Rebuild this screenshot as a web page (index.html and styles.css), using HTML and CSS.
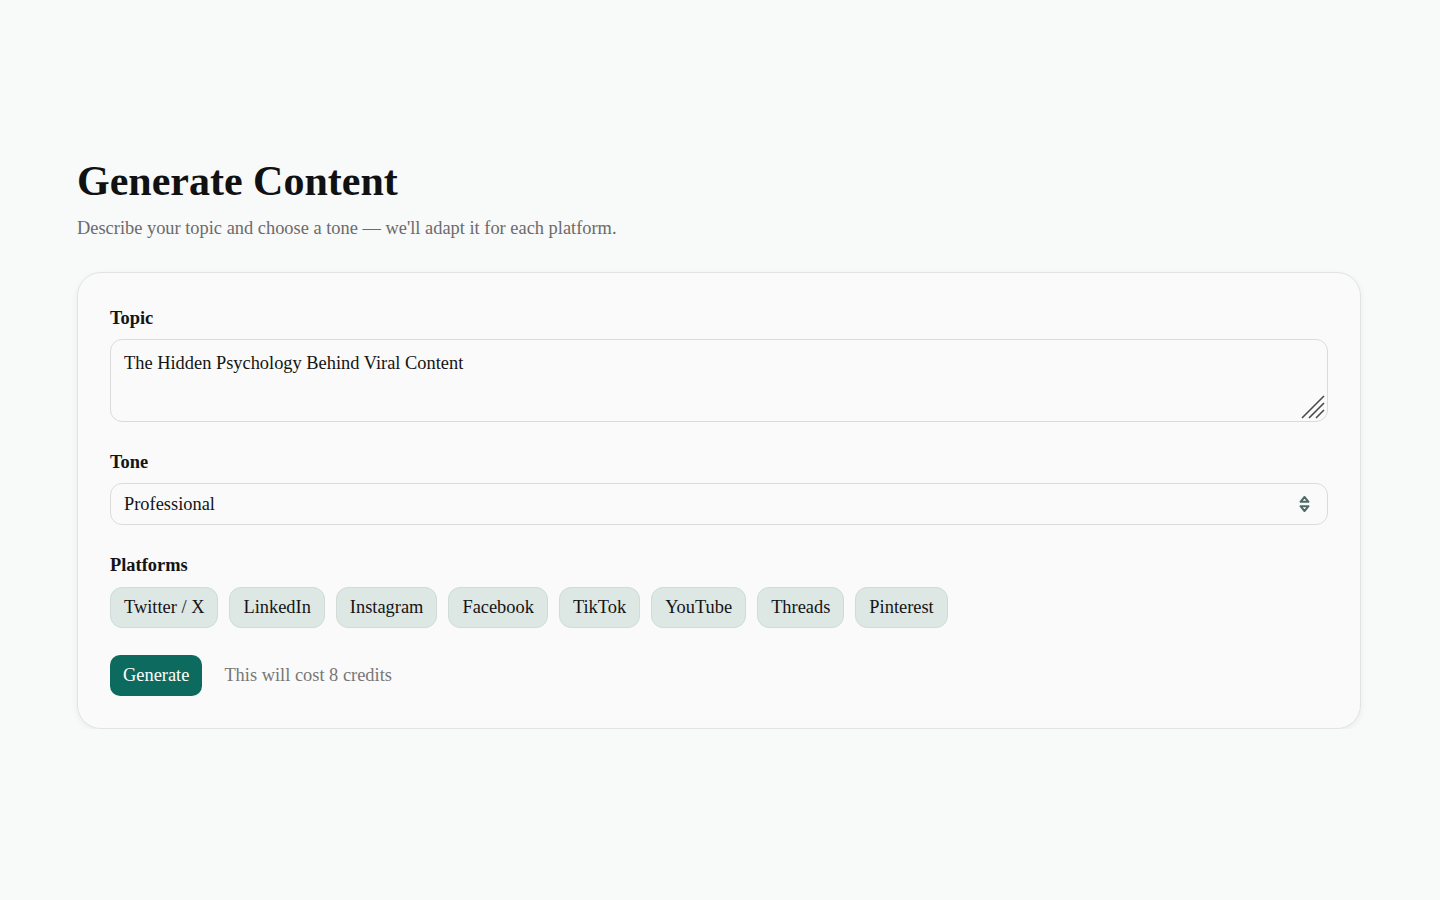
FILE: index.html
```html
<!DOCTYPE html>
<html lang="en">
<head>
  <meta charset="UTF-8">
  <title>Generate Content</title>
  <link rel="stylesheet" href="styles.css">
</head>
<body>
  <main class="page">
    <h1>Generate Content</h1>
    <p class="subtitle">Describe your topic and choose a tone — we'll adapt it for each platform.</p>

    <section class="card">
      <div class="field">
        <label for="topic">Topic</label>
        <div class="textarea-wrap">
          <textarea id="topic">The Hidden Psychology Behind Viral Content</textarea>
          <svg class="grip" width="26" height="26" viewBox="0 0 26 26">
            <path d="M2 24 L24 2 M9 24 L24 9 M16 24 L24 16" stroke="#4a4a4a" stroke-width="1.6" fill="none"/>
          </svg>
        </div>
      </div>

      <div class="field">
        <label for="tone">Tone</label>
        <div class="select-wrap">
          <select id="tone">
            <option>Professional</option>
            <option>Casual</option>
            <option>Witty</option>
          </select>
          <svg class="select-icon" width="13" height="18" viewBox="0 0 13 18">
            <path d="M6.5 2 L10.5 6.8 H2.5 Z" stroke="#4d6b63" stroke-width="2" stroke-linejoin="round" fill="none"/>
            <path d="M6.5 16 L10.5 11.2 H2.5 Z" stroke="#4d6b63" stroke-width="2" stroke-linejoin="round" fill="none"/>
          </svg>
        </div>
      </div>

      <div class="field">
        <span class="label">Platforms</span>
        <div class="chips">
          <button class="chip">Twitter / X</button>
          <button class="chip">LinkedIn</button>
          <button class="chip">Instagram</button>
          <button class="chip">Facebook</button>
          <button class="chip">TikTok</button>
          <button class="chip">YouTube</button>
          <button class="chip">Threads</button>
          <button class="chip">Pinterest</button>
        </div>
      </div>

      <div class="actions">
        <button class="generate">Generate</button>
        <span class="cost">This will cost 8 credits</span>
      </div>
    </section>
  </main>
</body>
</html>
```

FILE: styles.css
```css
body {
  margin: 0;
  background-color: #f8f9f9;
  color: #141414;
  font-family: 'Liberation Serif', 'Times New Roman', serif;
  font-size: 18.4px;
  line-height: 27px;
}

.page {
  width: 1284px;
  margin: 0 0 0 77px;
  padding-top: 157px;
}

h1 {
  margin: 0;
  font-size: 42px;
  line-height: 48px;
  font-weight: 700;
  color: #111;
}

.subtitle {
  margin: 10px 0 30px;
  color: #6b6b6b;
}

.card {
  background-color: #fafafa;
  border: 1px solid #e2e4e3;
  border-radius: 24px;
  padding: 32px;
  box-shadow: 0 2px 6px rgba(0, 0, 0, 0.06);
  display: flex;
  flex-direction: column;
  gap: 27px;
}

.field {
  display: flex;
  flex-direction: column;
}

label, .label {
  font-weight: 700;
  margin-bottom: 7px;
}

textarea, select {
  font-family: inherit;
  font-size: 18.4px;
  line-height: 27px;
  color: #141414;
  background-color: #fafafa;
  border: 1px solid #d9dcdb;
  border-radius: 12px;
  box-sizing: border-box;
  width: 100%;
}

.textarea-wrap {
  position: relative;
  display: flex;
}

textarea {
  height: 83px;
  padding: 10px 13px;
  resize: none;
}

.grip {
  position: absolute;
  right: 2px;
  bottom: 2px;
  pointer-events: none;
}

.select-wrap {
  position: relative;
}

select {
  appearance: none;
  height: 42px;
  padding: 0 13px;
}

.select-icon {
  position: absolute;
  right: 17px;
  top: 12px;
  pointer-events: none;
}

.chips {
  display: flex;
  flex-wrap: wrap;
  gap: 11px;
  margin-top: 1px;
}

.chip {
  font-family: inherit;
  font-size: 18.4px;
  line-height: 27px;
  color: #141414;
  background-color: #dde7e4;
  border: 1px solid #d0dcd8;
  border-radius: 12px;
  padding: 6px 13px;
  cursor: pointer;
}

.actions {
  display: flex;
  align-items: center;
  gap: 22px;
}

.generate {
  font-family: inherit;
  font-size: 18.4px;
  line-height: 27px;
  color: #fff;
  background-color: #0c6b5e;
  border: none;
  border-radius: 10px;
  padding: 7px 13px;
  cursor: pointer;
}

.cost {
  color: #777;
}
```
